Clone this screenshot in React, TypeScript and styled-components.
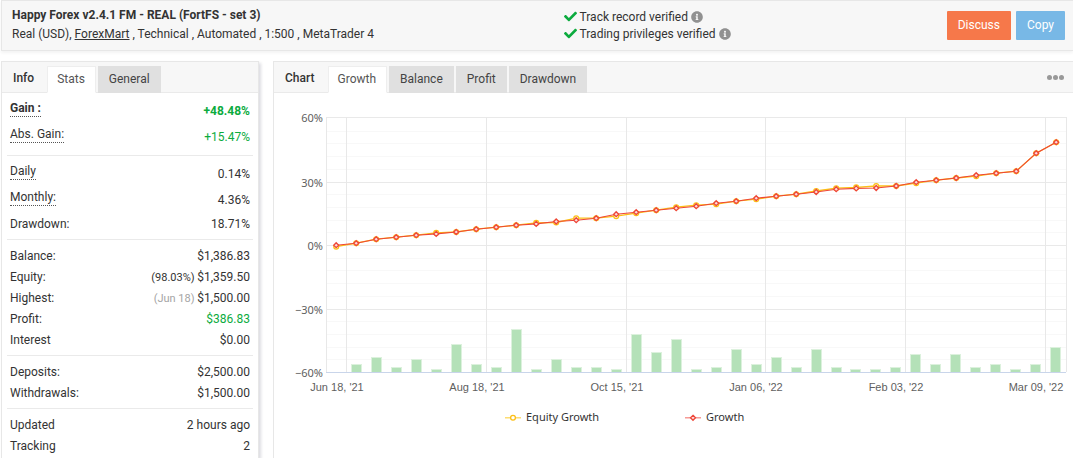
import React from 'react';
import styled, { createGlobalStyle, css } from 'styled-components';
import { FaCheck, FaInfoCircle } from 'react-icons/fa';

const GlobalStyle = createGlobalStyle`
  * { box-sizing: border-box; }
  body {
    margin: 0;
    background: #fff;
    color: #333;
    font: 12px/17px Roboto, "Liberation Sans", sans-serif;
  }
`;

const Page = styled.div`
  display: flex;
  flex-direction: column;
  gap: 10px;
  min-height: 100vh;
  padding-left: 1px;
`;

const Header = styled.header`
  display: flex;
  align-items: flex-start;
  padding: 5px 8px 6px 10px;
  background: #f7f7f7;
  border: 1px solid #e7e7e7;
  border-right: 0;
  box-shadow: 0 2px 3px rgba(0, 0, 0, 0.05);
`;

const Account = styled.div`
  flex: 0 0 52%;
  line-height: 19px;
`;

const Title = styled.h1`
  margin: 0;
  font-size: 12px;
  font-weight: 700;
`;

const Meta = styled.p`
  margin: 0;
`;

const BrokerLink = styled.a`
  color: inherit;
  text-decoration: underline;
`;

const Verified = styled.ul`
  flex: 1;
  margin: 0;
  padding: 3px 0 0 4px;
  list-style: none;
`;

const VerifiedItem = styled.li`
  display: flex;
  align-items: center;
  gap: 3px;
`;

const CheckMark = styled(FaCheck)`
  margin-bottom: 2px;
  color: #0cab3e;
  font-size: 13px;
`;

const InfoMark = styled(FaInfoCircle)`
  margin-bottom: 2px;
  color: #919191;
  font-size: 12px;
`;

const Actions = styled.div`
  display: flex;
  gap: 5px;
  padding-top: 5px;
`;

const ActionButton = styled.button<{ $color: string }>`
  height: 29px;
  padding: 0 11px;
  border: 0;
  border-radius: 1px;
  background: ${(p) => p.$color};
  color: #fff;
  font: inherit;
  cursor: pointer;
`;

const Columns = styled.main`
  display: flex;
  flex: 1;
  gap: 14px;
`;

const Panel = styled.section`
  display: flex;
  flex-direction: column;
  border: 1px solid #e7e7e7;
  border-bottom: 0;
  background: #fff;
`;

const InfoPanel = styled(Panel)`
  flex: 0 0 258px;
  box-shadow: 2px 2px 3px rgba(0, 0, 40, 0.14);
`;

const ChartPanel = styled(Panel)`
  flex: 1;
  min-width: 0;
  border-right: 0;
`;

const PanelBar = styled.div`
  display: flex;
  align-items: flex-end;
  height: 31px;
  padding: 0 9px 0 11px;
  background: #f7f7f7;
  border-bottom: 1px solid #eaeaea;
`;

const PanelTitle = styled.h2`
  margin: 0 13px 0 0;
  font-size: 12px;
  font-weight: 500;
  line-height: 27px;
`;

const TabList = styled.div`
  display: flex;
  gap: 2px;
  margin-bottom: -1px;
`;

const Tab = styled.button<{ $active?: boolean }>`
  height: 27px;
  padding: 0 10px;
  border: 1px solid #e0e0e0;
  background: #e0e0e0;
  color: #444;
  font: inherit;
  cursor: pointer;
  ${(p) =>
    p.$active &&
    css`
      padding: 0 10px 0 9px;
      border-color: #eee;
      border-bottom-color: #fff;
      background: #fff;
      color: #555;
    `}
`;

const MoreButton = styled.button`
  display: flex;
  gap: 1px;
  align-self: center;
  margin-left: auto;
  padding: 0;
  border: 0;
  background: none;
  cursor: pointer;
`;

const Dot = styled.span`
  width: 5px;
  height: 5px;
  border-radius: 50%;
  background: #999;
`;

const Stats = styled.div`
  padding: 0 5px;
`;

const StatGroup = styled.table`
  width: 100%;
  border-collapse: separate;
  border-spacing: 0;
  padding: 6px 3px 4px;
  border-bottom: 1px solid #eaeaea;
  &:last-child {
    padding-bottom: 0;
    border-bottom: 0;
  }
`;

const StatRow = styled.tr<{ $tall?: boolean }>`
  height: ${(p) => (p.$tall ? 26 : 21)}px;
`;

const StatLabel = styled.th<{ $tall?: boolean; $bold?: boolean }>`
  padding: 0;
  text-align: left;
  vertical-align: ${(p) => (p.$tall ? 'top' : 'middle')};
  font-weight: ${(p) => (p.$bold ? 700 : 400)};
`;

const Hint = styled.span`
  display: inline-block;
  margin-top: 2px;
  line-height: 15px;
  border-bottom: 1px dotted #555;
`;

const StatValue = styled.td<{ $tall?: boolean; $bold?: boolean; $gain?: boolean }>`
  padding: 0 0 ${(p) => (p.$tall ? 2 : 0)}px;
  text-align: right;
  font-weight: ${(p) => (p.$bold ? 700 : 400)};
  color: ${(p) => (p.$gain ? '#0cab3e' : 'inherit')};
`;

const ValueNote = styled.span<{ $muted?: boolean }>`
  font-size: 11px;
  color: ${(p) => (p.$muted ? '#a5a5a5' : 'inherit')};
`;

const ChartSvg = styled.svg`
  display: block;
  width: 100%;
  height: auto;
`;

const AxisY = styled.text`
  font: 11px "Noto Sans", sans-serif;
  fill: #606060;
  text-anchor: end;
`;

const AxisX = styled.text`
  font: 11px "Liberation Sans", sans-serif;
  fill: #606060;
  text-anchor: middle;
`;

const LegendText = styled.text`
  font: 11px "Noto Sans", sans-serif;
  fill: #333;
`;

type Stat = {
  label: string;
  value: string;
  hint?: boolean;
  bold?: boolean;
  gain?: boolean;
  note?: string;
  muted?: boolean;
};

const statGroups: Stat[][] = [
  [
    { label: 'Gain :', value: '+48.48%', hint: true, bold: true, gain: true },
    { label: 'Abs. Gain:', value: '+15.47%', hint: true, gain: true },
  ],
  [
    { label: 'Daily', value: '0.14%', hint: true },
    { label: 'Monthly:', value: '4.36%', hint: true },
    { label: 'Drawdown:', value: '18.71%' },
  ],
  [
    { label: 'Balance:', value: '$1,386.83' },
    { label: 'Equity:', value: '$1,359.50', note: '(98.03%)' },
    { label: 'Highest:', value: '$1,500.00', note: '(Jun 18)', muted: true },
    { label: 'Profit:', value: '$386.83', gain: true },
    { label: 'Interest', value: '$0.00' },
  ],
  [
    { label: 'Deposits:', value: '$2,500.00' },
    { label: 'Withdrawals:', value: '$1,500.00' },
  ],
  [
    { label: 'Updated', value: '2 hours ago' },
    { label: 'Tracking', value: '2' },
  ],
];

/* Chart geometry, in view box units */
const LEFT = 52;
const RIGHT = 792;
const TOP = 24;
const BOTTOM = 279;

const majorRows = [
  { y: 24, label: '60%' },
  { y: 89, label: '30%' },
  { y: 152, label: '0%' },
  { y: 216, label: '−30%' },
  { y: 279, label: '−60%' },
];
const minorRows = [38, 50, 63, 76, 101, 114, 127, 139, 165, 177, 190, 203, 228, 241, 254, 266];
const columns = [
  { x: 72, label: "Jun 18, '21" },
  { x: 212, label: "Aug 18, '21" },
  { x: 352, label: "Oct 15, '21" },
  { x: 491, label: "Jan 06, '22" },
  { x: 631, label: "Feb 03, '22" },
  { x: 771, label: "Mar 09, '22" },
];

const barHeights = [
  0, 8, 15, 5, 13, 3, 28, 8, 5, 43, 3, 13, 5, 5, 3, 38, 20, 33, 3, 5, 23, 8, 15, 5, 23, 5, 3, 3, 5,
  18, 8, 18, 5, 8, 3, 8, 25,
];

const growth = [
  152, 150, 146, 144, 142, 140.7, 138.8, 136, 134, 132, 130.7, 128.3, 127, 125, 121, 119, 117, 115,
  113, 110, 108, 105, 103, 101, 98.8, 96, 95.2, 94.8, 92.8, 89, 87, 84.8, 82, 80, 78, 60, 49,
];

const equityShift: Record<number, number> = {
  0: 1.5, 5: -1, 10: -1, 11: 1, 12: -2, 14: 2, 15: 1, 17: -1, 18: -1, 19: 1, 21: 1,
  24: -1, 25: -1, 26: -1, 27: -2, 29: 1, 32: 1,
};

const pointX = (i: number) => 62.2 + i * 20;
const equity = growth.map((y, i) => y + (equityShift[i] ?? 0));
const toPoints = (ys: number[]) => ys.map((y, i) => `${pointX(i)},${y + 0.2}`).join(' ');

function EquityMarker({ x, y }: { x: number; y: number }) {
  return <circle cx={x} cy={y} r="2.4" fill="#fff" stroke="#fcbf16" strokeWidth="1.3" />;
}

function GrowthMarker({ x, y }: { x: number; y: number }) {
  return (
    <path
      d={`M${x} ${y - 2.5}l2.5 2.5l-2.5 2.5l-2.5 -2.5z`}
      fill="#fbdcdc"
      stroke="#ee4638"
      strokeWidth="1.3"
    />
  );
}

function GrowthChart() {
  return (
    <ChartSvg viewBox="0 0 799 345" role="img" aria-label="Growth chart">
      <g shapeRendering="crispEdges">
        {minorRows.map((y) => (
          <rect key={y} x={LEFT} y={y} width={RIGHT - LEFT} height="1" fill="#f8f8f8" />
        ))}
        {majorRows.map(({ y }) => (
          <rect key={y} x={LEFT} y={y} width={RIGHT - LEFT} height="1" fill="#e9e9e9" />
        ))}
        {[LEFT, ...columns.map((c) => c.x), RIGHT].map((x) => (
          <rect key={x} x={x} y={TOP} width="1" height={BOTTOM - TOP} fill="#e8e8e8" />
        ))}
        {barHeights.map((h, i) =>
          h > 0 ? (
            <g key={i}>
              <rect x={(i > 25 ? 57 : 58) + i * 20 - 1} y={BOTTOM - h} width="11" height={h} fill="#dcf1dd" />
              <rect x={(i > 25 ? 57 : 58) + i * 20} y={BOTTOM - h + 1} width="9" height={h - 1} fill="#b4e1b8" />
            </g>
          ) : null,
        )}
        <rect x={LEFT} y={BOTTOM} width={RIGHT - LEFT} height="1" fill="#c9d5ea" />
      </g>
      <polyline points={toPoints(equity)} fill="none" stroke="#fcbf16" strokeWidth="1.3" />
      {equity.map((y, i) => (
        <EquityMarker key={i} x={pointX(i)} y={y + 0.2} />
      ))}
      <polyline points={toPoints(growth)} fill="none" stroke="#ee4638" strokeWidth="1.1" />
      {growth.map((y, i) => (
        <GrowthMarker key={i} x={pointX(i)} y={y + 0.2} />
      ))}
      {majorRows.map(({ y, label }) => (
        <AxisY key={label} x="49" y={y + 5}>
          {label}
        </AxisY>
      ))}
      {columns.map(({ x, label }) => (
        <AxisX key={label} x={Math.min(x - 9, 763)} y="298">
          {label}
        </AxisX>
      ))}
      <path d="M231 324.8H247" stroke="#fdd75c" strokeWidth="1.3" />
      <EquityMarker x={239} y={324.8} />
      <path d="M411 324.8H427" stroke="#f58b85" strokeWidth="1.3" />
      <GrowthMarker x={419} y={324.8} />
      <LegendText x="252" y="328">
        Equity Growth
      </LegendText>
      <LegendText x="432" y="328">
        Growth
      </LegendText>
    </ChartSvg>
  );
}

export default function App() {
  return (
    <>
      <GlobalStyle />
      <Page>
        <Header>
          <Account>
            <Title>Happy Forex v2.4.1 FM - REAL (FortFS - set 3)</Title>
            <Meta>
              Real (USD), <BrokerLink href="#broker">ForexMart</BrokerLink> , Technical , Automated , 1:500 ,
              MetaTrader 4
            </Meta>
          </Account>
          <Verified>
            {['Track record verified', 'Trading privileges verified'].map((text) => (
              <VerifiedItem key={text}>
                <CheckMark />
                {text}
                <InfoMark />
              </VerifiedItem>
            ))}
          </Verified>
          <Actions>
            <ActionButton $color="#f6784a">Discuss</ActionButton>
            <ActionButton $color="#78b8e6">Copy</ActionButton>
          </Actions>
        </Header>
        <Columns>
          <InfoPanel>
            <PanelBar>
              <PanelTitle>Info</PanelTitle>
              <TabList role="tablist">
                <Tab role="tab" aria-selected $active>
                  Stats
                </Tab>
                <Tab role="tab">General</Tab>
              </TabList>
            </PanelBar>
            <Stats>
              {statGroups.map((rows) => (
                <StatGroup key={rows[0].label}>
                  <tbody>
                    {rows.map((s) => (
                      <StatRow key={s.label} $tall={s.hint}>
                        <StatLabel scope="row" $tall={s.hint} $bold={s.bold}>
                          {s.hint ? <Hint>{s.label}</Hint> : s.label}
                        </StatLabel>
                        <StatValue $tall={s.hint} $bold={s.bold} $gain={s.gain}>
                          {s.note && <ValueNote $muted={s.muted}>{s.note} </ValueNote>}
                          {s.value}
                        </StatValue>
                      </StatRow>
                    ))}
                  </tbody>
                </StatGroup>
              ))}
            </Stats>
          </InfoPanel>
          <ChartPanel>
            <PanelBar>
              <PanelTitle>Chart</PanelTitle>
              <TabList role="tablist">
                <Tab role="tab" aria-selected $active>
                  Growth
                </Tab>
                <Tab role="tab">Balance</Tab>
                <Tab role="tab">Profit</Tab>
                <Tab role="tab">Drawdown</Tab>
              </TabList>
              <MoreButton aria-label="More options">
                <Dot />
                <Dot />
                <Dot />
              </MoreButton>
            </PanelBar>
            <GrowthChart />
          </ChartPanel>
        </Columns>
      </Page>
    </>
  );
}
